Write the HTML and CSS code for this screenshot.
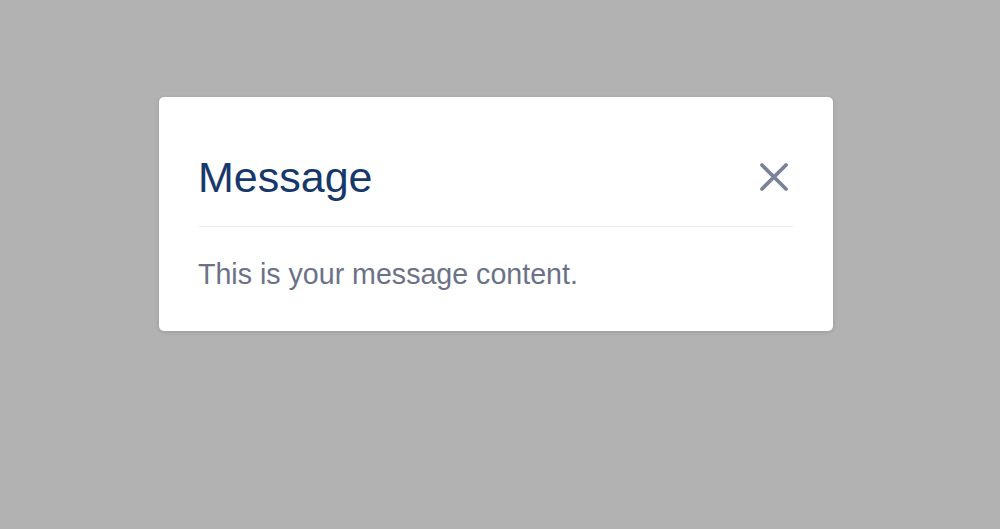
FILE: index.html
```html
<!DOCTYPE html>
<html lang="en">
<head>
    <meta charset="UTF-8">
    <meta name="viewport" content="width=device-width, initial-scale=1.0">
    <title>Message</title>
    <link rel="stylesheet" href="styles.css">
</head>
<body>

<div class="overlay">
    <div class="modal">
        <div class="modal-header">
            <h2 class="modal-title">Message</h2>
            <button class="close" aria-label="Close">
                <svg width="30" height="30" viewBox="0 0 30 30">
                    <path d="M3 3 L27 27 M27 3 L3 27" stroke="#7b8399" stroke-width="3.8" stroke-linecap="round" fill="none"/>
                </svg>
            </button>
        </div>
        <div class="modal-body">
            This is your message content.
        </div>
    </div>
</div>

</body>
</html>
```

FILE: styles.css
```css
body {
    margin: 0;
    background: #b2b2b2;
    font-family: 'Liberation Sans', Arial, Helvetica, sans-serif;
    height: 100vh;
}

.overlay {
    display: flex;
    justify-content: center;
    padding-top: 97px;
    padding-right: 8px;
}

.modal {
    width: 674px;
    box-sizing: border-box;
    background: #ffffff;
    border-radius: 5px;
    box-shadow: 0 1px 4px rgba(0, 0, 0, 0.15);
    padding: 56px 40px 40px;
}

.modal-header {
    display: flex;
    justify-content: space-between;
    align-items: center;
    padding-bottom: 25px;
    border-bottom: 1px solid #ececec;
}

.modal-title {
    margin: 0 0 0 -1px;
    font-size: 43px;
    font-weight: normal;
    line-height: 48px;
    color: #17386b;
}

.close {
    background: none;
    border: none;
    padding: 0;
    margin-right: 4px;
    cursor: pointer;
    display: flex;
}

.modal-body {
    padding-top: 30px;
    margin-left: -1px;
    font-size: 28.6px;
    line-height: 34px;
    color: #6b7288;
}
```
